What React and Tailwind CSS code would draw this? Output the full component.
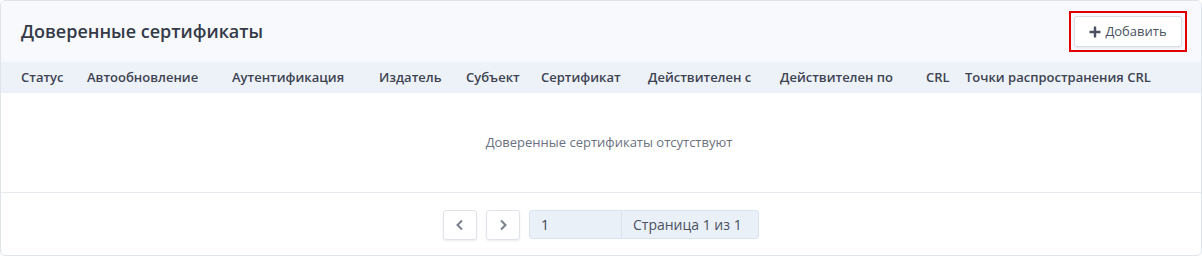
import React from "react";

const cols = [
  ["Статус", 66],
  ["Автообновление", 145],
  ["Аутентификация", 147],
  ["Издатель", 87],
  ["Субъект", 75],
  ["Сертификат", 107],
  ["Действителен с", 132],
  ["Действителен по", 146],
  ["CRL", 39],
  ["Точки распространения CRL", 220],
];

export default function App() {
  return (
    <div className="w-[1202px] h-[256px] bg-white" style={{ fontFamily: '"Open Sans", "Noto Sans", sans-serif' }}>
      <div className="h-[256px] border border-[#dfe3ea] rounded-[5px] overflow-hidden flex flex-col bg-white">
        <div className="h-[61px] bg-[#f7f9fc] flex items-center justify-between pl-[20px] pr-[14px]">
          <div className="text-[18px] text-[#343a48] font-semibold">Доверенные сертификаты</div>
          <div className="border-2 border-[#e00000] p-[3px]">
            <button className="h-[31px] w-[108px] bg-white border border-[#d8dde6] rounded-[3px] shadow-[0_1px_2px_rgba(0,0,0,0.08)] flex items-center justify-center gap-[4px] text-[13px] text-[#4a5161]">
              <svg width="12" height="12" viewBox="0 0 12 12"><path d="M6 0.5v11M0.5 6h11" stroke="#4a5161" strokeWidth="2.4" strokeLinecap="butt" /></svg>
              <span>Добавить</span>
            </button>
          </div>
        </div>
        <div className="h-[31px] bg-[#edf2f8] flex items-center pl-[20px] text-[13px] font-semibold text-[#3d4352]">
          {cols.map(([t, w]) => (
            <div key={t} style={{ width: w }} className="shrink-0 whitespace-nowrap">{t}</div>
          ))}
        </div>
        <div className="h-[100px] flex items-center justify-center pl-[16px] text-[13px] text-[#6b717e] border-b border-[#e6e9ee]">
          Доверенные сертификаты отсутствуют
        </div>
        <div className="flex-1 flex items-center justify-center gap-[9px] pt-[1px]">
          <button className="w-[34px] h-[30px] bg-white border border-[#e0e4ea] rounded-[3px] shadow-[0_1px_2px_rgba(0,0,0,0.08)] flex items-center justify-center">
            <svg width="10" height="12" viewBox="0 0 10 12"><path d="M7 1.5L2.5 6L7 10.5" fill="none" stroke="#7a808c" strokeWidth="2" /></svg>
          </button>
          <button className="w-[34px] h-[30px] bg-white border border-[#e0e4ea] rounded-[3px] shadow-[0_1px_2px_rgba(0,0,0,0.08)] flex items-center justify-center">
            <svg width="10" height="12" viewBox="0 0 10 12"><path d="M3 1.5L7.5 6L3 10.5" fill="none" stroke="#7a808c" strokeWidth="2" /></svg>
          </button>
          <div className="flex h-[29px] border border-[#d9e2ee] rounded-[3px] bg-[#eaf0f8] text-[14px] text-[#3d4352]">
            <div className="w-[92px] flex items-center pl-[11px] border-r border-[#d9e2ee]">1</div>
            <div className="w-[136px] flex items-center pl-[11px] text-[#4a5161]">Страница 1 из 1</div>
          </div>
        </div>
      </div>
    </div>
  );
}
